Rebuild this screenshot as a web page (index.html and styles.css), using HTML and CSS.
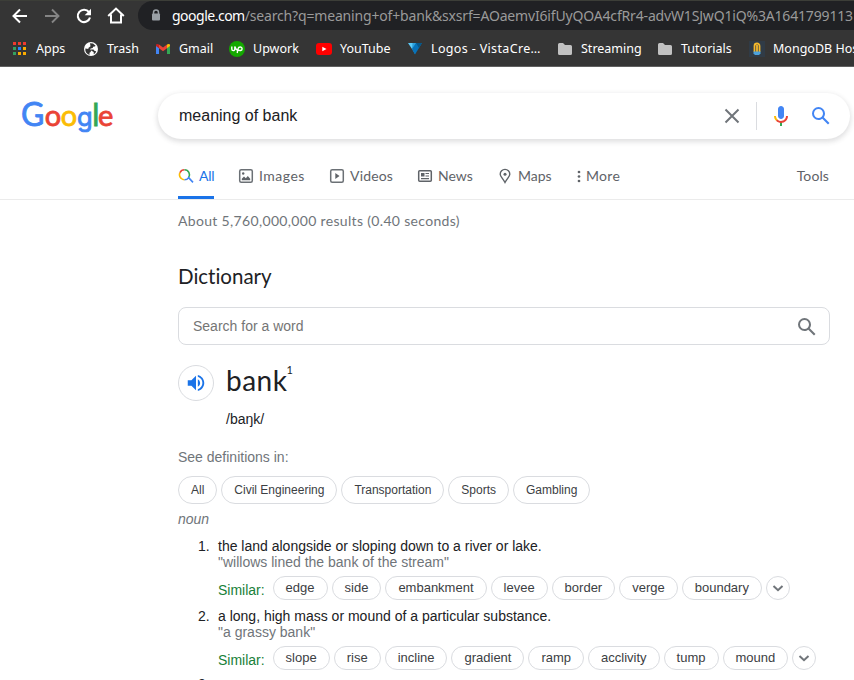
FILE: index.html
```html
<!DOCTYPE html>
<html lang="en">
<head>
<meta charset="utf-8">
<title>meaning of bank - Google Search</title>
<link rel="stylesheet" href="styles.css">
</head>
<body>
<div class="browser">
  <div class="toolbar">
    <div class="nav">
      <svg width="16" height="16" viewBox="0 0 16 16" fill="none" stroke="#fff" stroke-width="2"><path d="M15 8H2M8 1.500 1.500 8 8 14.500"/></svg>
      <svg width="16" height="16" viewBox="0 0 16 16" fill="none" stroke="#858585" stroke-width="1.900"><path d="M1 8h13M8 1.500 14.500 8 8 14.500"/></svg>
      <svg width="16" height="16" viewBox="0 0 16 16"><path d="M13 4.200A6.200 6.200 0 1 0 14 9.500" fill="none" stroke="#fff" stroke-width="2.100"/><path d="M15 .8v6.400H8.700z" fill="#fff"/></svg>
      <svg width="18" height="17" viewBox="0 0 18 17" fill="none" stroke="#fff" stroke-width="2"><path d="M1.200 9 9 1.600 16.800 9M4 7.500V15.500h10V7.500"/></svg>
    </div>
    <div class="address">
      <svg width="10" height="13" viewBox="0 0 10 13"><path d="M2.500 5V3.400a2.500 2.500 0 0 1 5 0V5" fill="none" stroke="#9aa0a6" stroke-width="1.500"/><rect x="1" y="4.500" width="8" height="7" rx="1" fill="#9aa0a6"/></svg>
      <div class="url"><span class="host">google.com</span><span class="path">/search?q=meaning+of+bank&amp;sxsrf=AOaemvI6ifUyQOA4cfRr4-advW1SJwQ1iQ%3A1641799113</span></div>
    </div>
  </div>
  <div class="bookmarks">
    <div class="bm apps"><svg width="16" height="16" viewBox="0 0 16 16"><path d="M1 1h3v3H1zM6 1h3v3H6zM11 1h3v3h-3z" fill="#f03a2e"/><path d="M1 6h3v3H1zM1 11h3v3H1z" fill="#34a060"/><path d="M6 6h3v3H6z" fill="#2684fc"/><path d="M11 6h3v3h-3zM6 11h3v3H6zM11 11h3v3h-3z" fill="#f9ab00"/></svg><span>Apps</span></div>
    <div class="bm trash"><svg width="16" height="16" viewBox="0 0 16 16"><circle cx="8" cy="8" r="7" fill="#fff"/><path d="M2.300 7.500 6 8l2 1.500-.3 1.500-1.200.8v2.100C3.800 13.200 2 11 2.300 7.500zM7 2.200l3 .3 2.600 2.200-.8.900-1.700.1-.4 1.400-2 .3-.8 1h3.600l1.200 1.500 1.500.3c-.4 1.500-1.500 2.600-2.500 3.100V11L8.500 9.700 6.300 8.200 5 7.300l2.500-2z" fill="#353535"/></svg><span>Trash</span></div>
    <div class="bm gmail"><svg width="16" height="16" viewBox="0 0 16 16"><path d="M1 4.500l3 2.300V13H1z" fill="#4285f4"/><path d="M12 6.800l3-2.300V13h-3z" fill="#34a853"/><path d="M4 3.500 8 6.600l4-3.100v3.700L8 10.300 4 7.200z" fill="#ea4335"/><path d="M1 4.300C1 2.900 2.600 2.400 4 3.500v3.700L1 4.900z" fill="#c5221f"/><path d="M15 4.300c0-1.400-1.600-1.900-3-.8v3.700l3-2.300z" fill="#fbbc04"/></svg><span>Gmail</span></div>
    <div class="bm upwork"><svg width="16" height="16" viewBox="0 0 16 16"><circle cx="8" cy="8" r="8" fill="#14a800"/><path d="M2.800 5.500v2.500c0 2.200 3 2.200 3 0V5.500c.8 2.200 1.500 3.300 2.900 3.800M8.200 12l.9-4.300c.5-2.400 4-2.300 4 .1 0 2-2.400 2.300-4.200.9" fill="none" stroke="#fff" stroke-width="1.400"/></svg><span>Upwork</span></div>
    <div class="bm youtube"><svg width="16" height="16" viewBox="0 0 16 16"><rect y="2" width="16" height="12" rx="3" fill="#f00"/><path d="M6.300 5.700v4.600L10.500 8z" fill="#fff"/></svg><span>YouTube</span></div>
    <div class="bm vista"><svg width="16" height="16" viewBox="0 0 16 16"><path d="M1 2h8L5 8z" fill="#5ccbfa"/><path d="M9 2H5.500L5 8l3 5z" fill="#2da0da"/><path d="M9 2h6L8 13.500 5 8z" fill="#0872b8"/><path d="M9 2l3 5 3-5z" fill="#075889"/></svg><span>Logos - VistaCre…</span></div>
    <div class="bm streaming"><svg width="16" height="16" viewBox="0 0 16 16"><path d="M1 3.500Q1 2 2.500 2H6l2 2h5.500Q15 4 15 5.500v7q0 1.500-1.500 1.500h-11Q1 14 1 12.500z" fill="#c1c1c1"/></svg><span>Streaming</span></div>
    <div class="bm tutorials"><svg width="16" height="16" viewBox="0 0 16 16"><path d="M1 3.500Q1 2 2.500 2H6l2 2h5.500Q15 4 15 5.500v7q0 1.500-1.500 1.500h-11Q1 14 1 12.500z" fill="#c1c1c1"/></svg><span>Tutorials</span></div>
    <div class="bm mongo"><svg width="16" height="16" viewBox="0 0 16 16"><path d="M0 0h16v16H0z" fill="#303b46"/><path d="M5.500 11V5a2.500 2.500 0 0 1 5 0v6M8 4v7" fill="none" stroke="#f6b92b" stroke-width="1.800"/><path d="M4.500 10.500h7v2l-1.500 1.500H6l-1.500-1.500z" fill="#4da3dd"/></svg><span>MongoDB Hos</span></div>
  </div>
</div>

<header class="head">
  <div class="logo"><svg width="96" height="46" viewBox="0 0 96 46"><text y="32.500"><tspan class="b cap" x="0">G</tspan><tspan class="r" x="23.800">o</tspan><tspan class="y" x="39.700">o</tspan><tspan class="b gee" x="56">g</tspan><tspan class="gr ell" x="71.200">l</tspan><tspan class="r" x="77">e</tspan></text></svg></div>
  <div class="searchbox">
    <span class="query">meaning of bank</span>
    <svg class="clear" width="16" height="16" viewBox="0 0 16 16"><path d="M1.500 1.500l13 13M14.500 1.500l-13 13" stroke="#70757a" stroke-width="2"/></svg>
    <span class="divider"></span>
    <svg class="mic" width="24" height="24" viewBox="0 0 24 24"><path fill="#4285f4" d="M12 15c1.660 0 3-1.310 3-2.970V4.990C15 3.340 13.660 2 12 2S9 3.340 9 4.990v7.040C9 13.690 10.340 15 12 15z"/><path fill="#34a853" d="M11 18.080h2V22h-2z"/><path fill="#fbbc04" d="M7.050 16.870C5.780 15.590 5 13.830 5 12h2c0 1.450.560 2.420 1.470 3.380v.320l-1.150 1.180z"/><path fill="#ea4335" d="M12 16.930a4.970 5.250 0 0 1-3.540-1.550l-1.410 1.490c1.260 1.340 3.020 2.130 4.950 2.130 3.870 0 6.990-2.920 6.990-7h-1.990c0 2.920-2.240 4.930-5 4.930z"/></svg>
    <svg class="find" width="24" height="24" viewBox="0 0 24 24"><path fill="#4285f4" d="M20.490 19l-5.730-5.730C15.530 12.200 16 10.910 16 9.500A6.500 6.500 0 1 0 9.500 16c1.410 0 2.700-.47 3.770-1.240L19 20.490 20.490 19zM5 9.500C5 7.010 7.010 5 9.500 5S14 7.010 14 9.500 11.990 14 9.500 14 5 11.990 5 9.500z"/></svg>
  </div>
</header>

<nav class="tabs">
  <div class="tab all"><svg width="16" height="16" viewBox="0 0 16 16" fill="none" stroke-width="1.600"><path d="M2 4.600A5 5 0 0 0 3.100 10.300 5 5 0 0 0 6.500 11.800" stroke="#fbbc04"/><path d="M2 4.600A5 5 0 0 1 6.500 1.800" stroke="#ea4335"/><path d="M6.500 1.800A5 5 0 0 1 10.600 9.600" stroke="#34a853"/><path d="M6.500 11.800a5 5 0 0 0 4.100-2.200L15 14.400" stroke="#4285f4"/></svg><span>All</span></div>
  <div class="tab images"><svg width="16" height="16" viewBox="0 0 16 16"><rect x="1.700" y="1.700" width="12.600" height="12.600" rx="1.500" fill="none" stroke="#6b7075" stroke-width="1.500"/><circle cx="5.200" cy="5.500" r="1.200" fill="#5f6368"/><path d="M3.800 12.200v-1.500L6 8.600l1.800 1.600L9.800 8l2.400 2.700v1.500z" fill="#5f6368"/></svg><span>Images</span></div>
  <div class="tab videos"><svg width="16" height="16" viewBox="0 0 16 16"><rect x="1.700" y="1.700" width="12.600" height="12.600" rx="1.500" fill="none" stroke="#6b7075" stroke-width="1.500"/><path d="M6.300 5v6l4.200-3z" fill="#5f6368"/></svg><span>Videos</span></div>
  <div class="tab news"><svg width="16" height="16" viewBox="0 0 16 16"><rect x="1.700" y="2.700" width="12.600" height="10.600" rx="1" fill="none" stroke="#5f6368" stroke-width="1.500"/><path d="M4 5h3.500v3.500H4zM8.500 5H12v1.100H8.500zM8.500 7.400H12v1.100H8.500zM4 10h8v1.200H4z" fill="#5f6368"/></svg><span>News</span></div>
  <div class="tab maps"><svg width="16" height="16" viewBox="0 0 16 16"><path d="M8 1.400a4.800 4.800 0 0 0-4.800 4.800C3.200 8.400 5.500 10 8 14.500c2.500-4.500 4.800-6.100 4.800-8.300A4.800 4.800 0 0 0 8 1.400z" fill="none" stroke="#5f6368" stroke-width="1.400"/><circle cx="8" cy="6.200" r="1.500" fill="#5f6368"/></svg><span>Maps</span></div>
  <div class="tab more"><svg width="4" height="16" viewBox="0 0 4 16" fill="#5f6368"><circle cx="2" cy="4" r="1.350"/><circle cx="2" cy="8.500" r="1.350"/><circle cx="2" cy="13" r="1.350"/></svg><span>More</span></div>
  <div class="tab tools"><span>Tools</span></div>
</nav>

<main class="content">
  <div class="stats">About 5,760,000,000 results (0.40 seconds)</div>
  <h2 class="title">Dictionary</h2>
  <div class="word-search"><span>Search for a word</span><svg width="24" height="24" viewBox="0 0 24 24"><path fill="#70757a" d="M20.490 19l-5.730-5.730C15.530 12.200 16 10.910 16 9.500A6.500 6.500 0 1 0 9.500 16c1.410 0 2.700-.47 3.770-1.240L19 20.490 20.490 19zM5 9.500C5 7.010 7.010 5 9.500 5S14 7.010 14 9.500 11.990 14 9.500 14 5 11.990 5 9.500z"/></svg></div>
  <div class="entry">
    <div class="speaker"><svg width="22" height="22" viewBox="0 0 24 24" fill="#1a73e8"><path d="M3 9v6h4l5 5V4L7 9H3zm13.500 3A4.500 4.500 0 0 0 14 7.970v8.050c1.480-.73 2.500-2.250 2.500-4.020zM14 3.230v2.060c2.890.86 5 3.540 5 6.710s-2.110 5.850-5 6.710v2.060c4.010-.91 7-4.490 7-8.770s-2.990-7.860-7-8.770z"/></svg></div>
    <div><div class="word"><span>bank</span><sup>1</sup></div><div class="phonetic">/baŋk/</div></div>
  </div>
  <div class="see">See definitions in:</div>
  <div class="topics"><span>All</span><span>Civil Engineering</span><span>Transportation</span><span>Sports</span><span>Gambling</span></div>
  <div class="pos">noun</div>
  <div class="senses">
    <div class="sense"><div class="num">1.</div><div>
      <div class="def">the land alongside or sloping down to a river or lake.</div>
      <div class="ex">"willows lined the bank of the stream"</div>
      <div class="similar"><b>Similar:</b><span>edge</span><span>side</span><span>embankment</span><span>levee</span><span>border</span><span>verge</span><span>boundary</span><i><svg width="12" height="12" viewBox="0 0 12 12"><path d="M1.500 4 6 8.200 10.500 4" fill="none" stroke="#70757a" stroke-width="2"/></svg></i></div>
    </div></div>
    <div class="sense"><div class="num">2.</div><div>
      <div class="def">a long, high mass or mound of a particular substance.</div>
      <div class="ex">"a grassy bank"</div>
      <div class="similar"><b>Similar:</b><span>slope</span><span>rise</span><span>incline</span><span>gradient</span><span>ramp</span><span>acclivity</span><span>tump</span><span>mound</span><i><svg width="12" height="12" viewBox="0 0 12 12"><path d="M1.500 4 6 8.200 10.500 4" fill="none" stroke="#70757a" stroke-width="2"/></svg></i></div>
    </div></div>
    <div class="sense last"><div class="num">3.</div></div>
  </div>
</main>
</body>
</html>
```
FILE: styles.css
```css
* { box-sizing: border-box; }
html, body { height: 680px; overflow: hidden; }
body { margin: 0; background: #fff; color: #202124; font: 14px/16px "Liberation Sans", Arial, sans-serif; }
svg { display: block; flex: none; }

.browser { height: 67px; background: #353535; border-bottom: 1px solid #606060; overflow: hidden; font-family: "Noto Sans", sans-serif; }
.toolbar { height: 30px; display: flex; border-top: 1px solid #3c3e38; }
.nav { width: 138px; flex: none; display: flex; align-items: center; padding-left: 12px; gap: 16px; }
.nav svg:last-child { margin-left: -1px; }
.address { flex: 1; min-width: 0; height: 29px; background: #202124; border-radius: 15px 0 0 15px; display: flex; align-items: center; padding-left: 13px; overflow: hidden; }
.url { margin-left: 11px; white-space: nowrap; font-size: 14px; line-height: 28px; }
.host { color: #fff; letter-spacing: -.5px; }
.path { color: #9a9a9a; letter-spacing: -.17px; }
.bookmarks { display: flex; align-items: center; height: 37px; padding-left: 12px; }
.bm { display: flex; flex: none; align-items: center; gap: 8px; color: #fff; font-size: 12.5px; line-height: 20px; white-space: nowrap; }
.apps { width: 71px; }
.trash { width: 72px; }
.gmail { width: 74px; }
.upwork { width: 87px; }
.youtube { width: 91px; }
.vista { width: 150px; letter-spacing: .35px; }
.streaming { width: 100px; }
.tutorials { width: 92px; }

.head { display: flex; height: 92px; padding: 26px 4px 0 21px; }
.logo { width: 137px; font: 29px Lato, sans-serif; }
.logo text { stroke-width: .8px; }
.cap { font-size: 32px; }
.gee { font-family: Inter, sans-serif; font-size: 25.5px; }
.ell { font-size: 30px; }
.b { fill: #4285f4; stroke: #4285f4; }
.r { fill: #ea4335; stroke: #ea4335; }
.y { fill: #fbbc05; stroke: #fbbc05; }
.gr { fill: #34a853; stroke: #34a853; }
.searchbox { flex: 1; height: 46px; border-radius: 23px; box-shadow: 0 2px 5px 1px rgba(64, 60, 67, .16); display: flex; align-items: center; padding: 0 17px 0 21px; }
.query { flex: 1; font-size: 16px; }
.divider { width: 1px; height: 28px; background: #dadce0; margin: 0 12px 0 16px; }
.find { margin-left: 16px; }

.tabs { height: 41px; border-bottom: 1px solid #ebebeb; padding-left: 178px; display: flex; font: 14px/34px Lato, sans-serif; color: #5f6368; }
.tab { display: flex; align-items: center; height: 40px; padding-bottom: 6px; }
.tab svg { margin-right: 5px; }
.all { width: 36px; color: #1a73e8; border-bottom: 3px solid #1a73e8; padding-bottom: 3px; margin-right: 24px; letter-spacing: -.2px; }
.images { width: 91px; letter-spacing: .5px; }
.videos { width: 88px; letter-spacing: .15px; }
.news { width: 80px; }
.maps { width: 80px; }
.more { flex: 1; }
.more span { letter-spacing: .3px; }
.tools { margin-right: 25px; letter-spacing: .1px; }

.content { padding-left: 178px; width: 830px; }
.stats { margin-top: 13px; height: 16px; font: 14px/16px Lato, sans-serif; letter-spacing: .33px; color: #70757a; }
.title { margin: 34px 0 0; font: 400 20.5px/26px Lato, sans-serif; font-variant-ligatures: none; }
.word-search { margin-top: 18px; height: 38px; border: 1px solid #dadce0; border-radius: 8px; display: flex; align-items: center; justify-content: space-between; padding: 2px 10px 0 14px; color: #757575; }
.word-search span { margin-top: -2px; }
.entry { display: flex; gap: 12px; margin-top: 20px; height: 64px; }
.speaker { width: 36px; height: 36px; border: 1px solid #dadce0; border-radius: 50%; display: flex; align-items: center; justify-content: center; }
.word { display: flex; margin-top: -1px; font: 28px/32px Lato, sans-serif; letter-spacing: .5px; }
.word sup { margin-left: -1px; font-size: 11px; line-height: 12px; }
.phonetic { margin-top: 15px; }
.see { margin-top: 20px; color: #70757a; }
.topics { margin-top: 11px; display: flex; gap: 4px; }
.topics span { height: 28px; line-height: 26px; padding: 0 12px; border: 1px solid #dadce0; border-radius: 14px; font-size: 12px; color: #3c4043; }
.pos { margin-top: 7px; font-style: italic; color: #70757a; }
.senses { margin-top: 11px; }
.sense { display: flex; height: 70px; padding-left: 20px; }
.last { height: 2px; margin-top: -2px; }
.num { width: 20px; }
.def, .ex { white-space: nowrap; }
.ex { color: #70757a; }
.similar { display: flex; gap: 4px; margin-top: 6px; white-space: nowrap; }
.similar b { font-weight: 400; color: #188038; padding-top: 6px; width: 50.6px; }
.similar span, .similar i { height: 24px; line-height: 22px; padding: 0 12px; border: 1px solid #dadce0; border-radius: 12px; font-size: 13px; color: #3c4043; }
.similar i { width: 24px; padding: 0; display: flex; align-items: center; justify-content: center; }
```
